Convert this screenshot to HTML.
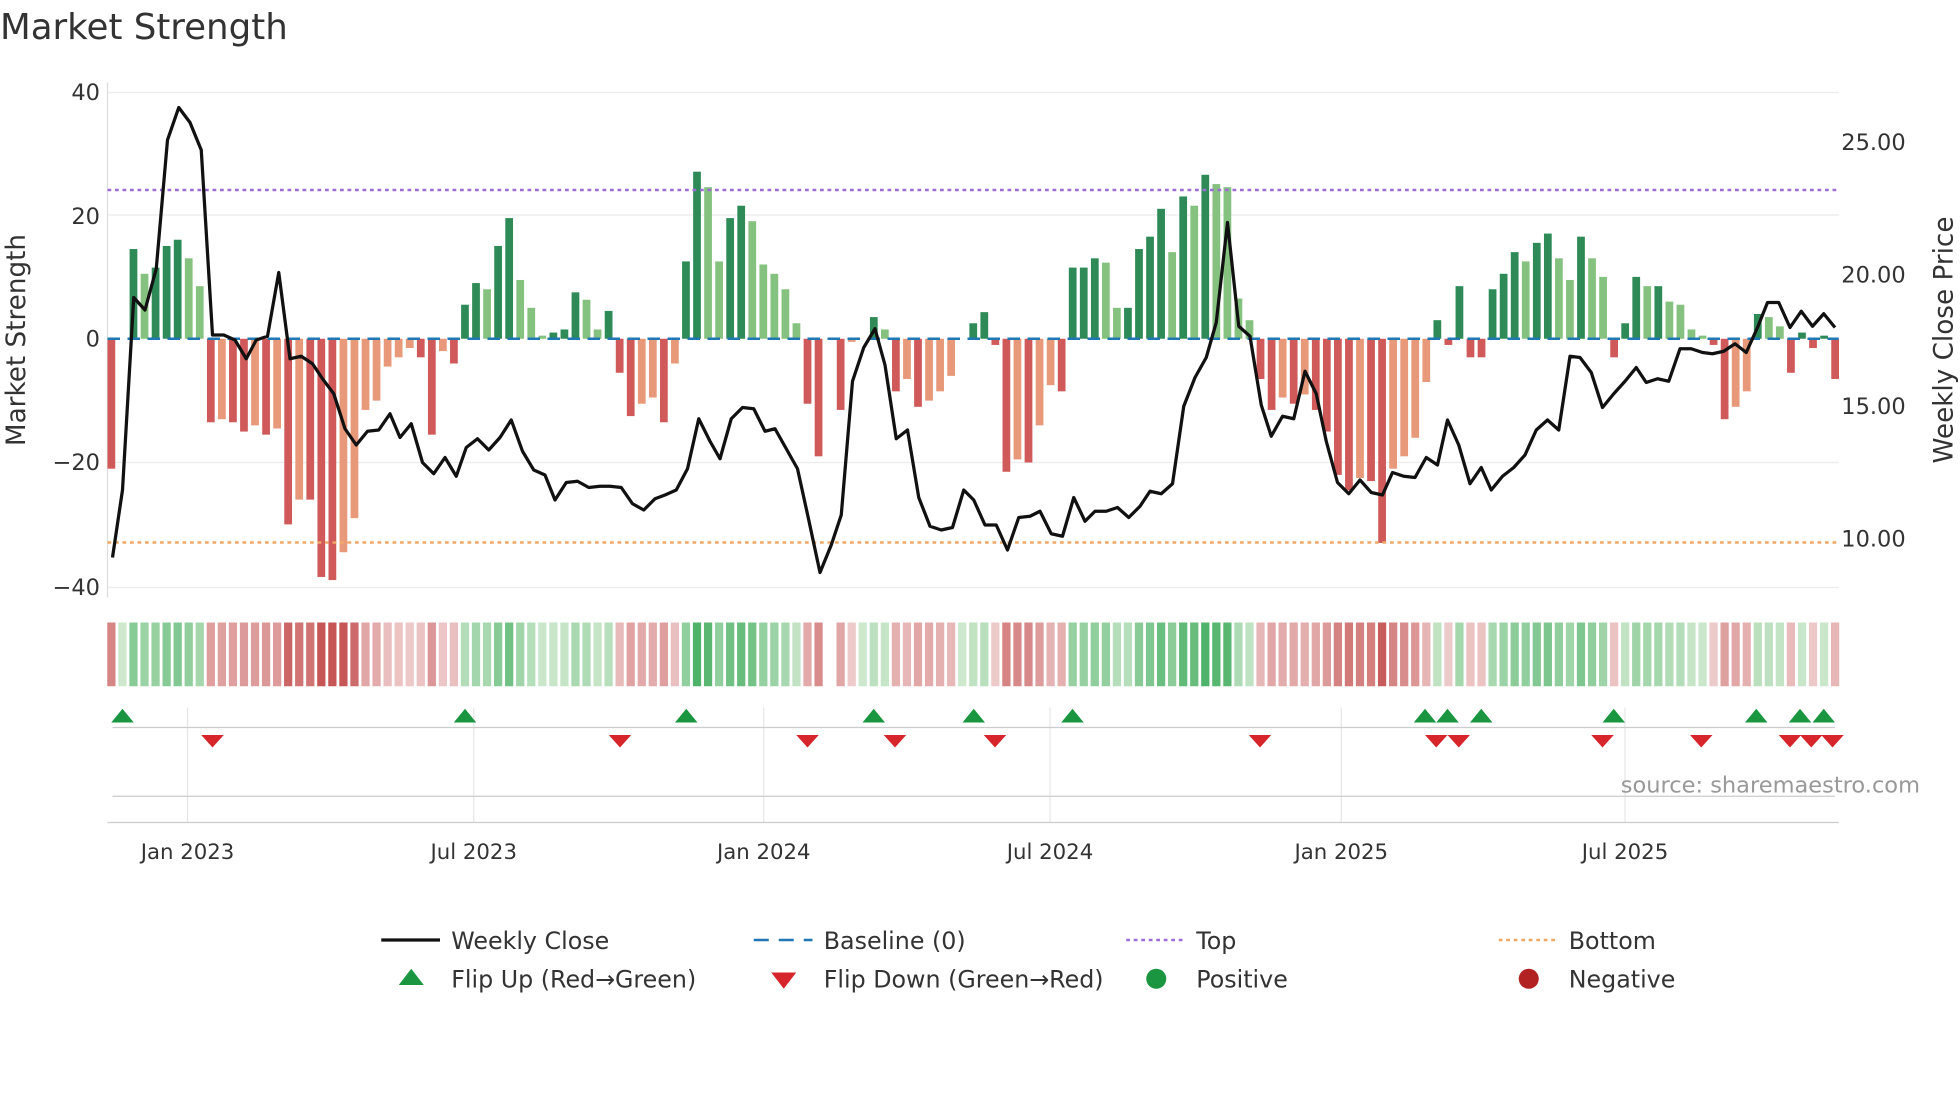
<!DOCTYPE html>
<html><head><meta charset="utf-8"><style>
html,body{margin:0;padding:0;background:#fff;}
svg{display:block;font-family:"DejaVu Sans","Liberation Sans",sans-serif;}
</style></head><body>
<svg id="s" width="1960" height="1102" viewBox="0 0 1568 881.6" xmlns="http://www.w3.org/2000/svg">
<rect width="1568" height="882" fill="#fff"/>
<text x="0" y="31" font-size="28.5" fill="#333">Market Strength</text>
<g stroke="#ececec" stroke-width="1">
<line x1="86" x2="1471" y1="74" y2="74"/><line x1="86" x2="1471" y1="172" y2="172"/>
<line x1="86" x2="1471" y1="370" y2="370"/><line x1="86" x2="1471" y1="470" y2="470"/>
</g>
<line x1="86" x2="86" y1="66" y2="478" stroke="#ddd"/>
<g font-size="18" fill="#333" text-anchor="end">
<text x="80" y="80">40</text><text x="80" y="179">20</text><text x="80" y="277">0</text>
<text x="80" y="376">−20</text><text x="80" y="476">−40</text>
</g>
<g font-size="18" fill="#333">
<text x="1473" y="120">25.00</text><text x="1473" y="226">20.00</text>
<text x="1473" y="331">15.00</text><text x="1473" y="437">10.00</text>
</g>
<text transform="translate(20,272) rotate(-90)" font-size="21" fill="#333" text-anchor="middle">Market Strength</text>
<text transform="translate(1562,272) rotate(-90)" font-size="21" fill="#333" text-anchor="middle">Weekly Close Price</text>
<g id="bars"></g>
<line x1="86" x2="1471" y1="152" y2="152" stroke="#9b6fd6" stroke-width="2" stroke-dasharray="3,3"/>
<line x1="86" x2="1471" y1="434" y2="434" stroke="#f0a866" stroke-width="2" stroke-dasharray="3,3"/>
<line x1="86" x2="1471" y1="271" y2="271" stroke="#1f77b4" stroke-width="2" stroke-dasharray="10,6"/>
<polyline id="price" fill="none" stroke="#111" stroke-width="2.6" stroke-linejoin="round"/>
<g id="heat"></g>
<g stroke="#e6e6e6"><line x1="150" x2="150" y1="566" y2="658"/><line x1="379" x2="379" y1="566" y2="658"/><line x1="611" x2="611" y1="566" y2="658"/><line x1="840" x2="840" y1="566" y2="658"/><line x1="1073" x2="1073" y1="566" y2="658"/><line x1="1300" x2="1300" y1="566" y2="658"/></g>
<line x1="90" x2="1468" y1="582" y2="582" stroke="#ccc"/>
<line x1="90" x2="1468" y1="637" y2="637" stroke="#ccc"/>
<line x1="86" x2="1471" y1="658" y2="658" stroke="#ccc"/>
<g id="mk"></g>
<text x="1536" y="634" font-size="18" fill="#999" text-anchor="end">source: sharemaestro.com</text>
<g font-size="17" fill="#333" text-anchor="middle">
<text x="150" y="687">Jan 2023</text><text x="379" y="687">Jul 2023</text><text x="611" y="687">Jan 2024</text>
<text x="840" y="687">Jul 2024</text><text x="1073" y="687">Jan 2025</text><text x="1300" y="687">Jul 2025</text>
</g>
<g font-size="19" fill="#333">
<line x1="305" x2="352" y1="752" y2="752" stroke="#111" stroke-width="2.6"/><text x="361" y="759">Weekly Close</text>
<line x1="603" x2="650" y1="752" y2="752" stroke="#1f77b4" stroke-width="2" stroke-dasharray="12,8"/><text x="659" y="759">Baseline (0)</text>
<line x1="901" x2="948" y1="752" y2="752" stroke="#9b6fd6" stroke-width="2" stroke-dasharray="3,3"/><text x="957" y="759">Top</text>
<line x1="1199" x2="1246" y1="752" y2="752" stroke="#f0a866" stroke-width="2" stroke-dasharray="3,3"/><text x="1255" y="759">Bottom</text>
<polygon points="319,788 329,775 339,788" fill="#1a9641"/><text x="361" y="790">Flip Up (Red→Green)</text>
<polygon points="617,778 627,791 637,778" fill="#d7262b"/><text x="659" y="790">Flip Down (Green→Red)</text>
<circle cx="925" cy="783" r="8" fill="#1a9641"/><text x="957" y="790">Positive</text>
<circle cx="1223" cy="783" r="8" fill="#b22222"/><text x="1255" y="790">Negative</text>
</g>
</svg>
<script>
var NS="http://www.w3.org/2000/svg";
function el(t,a,p){var e=document.createElementNS(NS,t);for(var k in a)e.setAttribute(k,a[k]);document.getElementById(p).appendChild(e);return e;}
var v=[-21,0,14.5,10.5,11.5,15,16,13,8.5,-13.5,-13,-13.5,-15,-14,-15.5,-14.5,-30,-26,-26,-38.5,-39,-34.5,-29,-11.5,-10,-4.5,-3,-1.5,-3,-15.5,-2,-4,5.5,9,8,15,19.5,9.5,5,0.5,1,1.5,7.5,6.3,1.5,4.5,-5.5,-12.5,-10.5,-9.5,-13.5,-4,12.5,27,24.5,12.5,19.5,21.5,19,12,10.5,8,2.5,-10.5,-19,0,-11.5,-0.5,0,3.5,1.5,-8.5,-6.5,-11,-10,-8.5,-6,0,2.5,4.3,-1,-21.5,-19.5,-20,-14,-7.5,-8.5,11.5,11.5,13,12.3,5,5,14.5,16.5,21,14,23,21.5,26.5,25,24.5,6.5,3,-6.5,-11.5,-9.5,-10.5,-9,-11.5,-15,-22,-24.5,-22.5,-23,-33,-21,-19,-16,-7,3,-1,8.5,-3,-3,8,10.5,14,12.5,15.5,17,13,9.5,16.5,13,10,-3,2.5,10,8.5,8.5,6,5.5,1.5,0.5,-1,-13,-11,-8.5,4,3.5,2,-5.5,1,-1.5,0.5,-6.5];
var n=v.length,dx=(1468-89)/(n-1);
for(var i=0;i<n;i++){var x=89+i*dx,y0=271,h=v[i]*4.95,p=i?v[i-1]:0,c;
 if(v[i]>=0)c=(v[i]>=p)?"#2e8b57":"#86c27f"; else c=(v[i]<=p)?"#d05a5a":"#e8997a";
 if(Math.abs(v[i])>0.2)el("rect",{x:x-3,y:h>0?y0-h:y0,width:6.2,height:Math.abs(h),fill:c},"bars");
 var a=Math.min(1,Math.abs(v[i])/35), hc;
 if(v[i]>=0){hc="rgb("+Math.round(205-165*a)+","+Math.round(232-70*a)+","+Math.round(205-130*a)+")";}
 else{hc="rgb("+Math.round(238-40*a)+","+Math.round(205-120*a)+","+Math.round(205-120*a)+")";}
 if(i!=65)el("rect",{x:x-3.2,y:498,width:6.6,height:51,fill:hc},"heat");}
var pts="90,446 98,392 107,238 116,248 125,215 134,112 143,86 152,98 161,120 170,268 179,268 188,272 197,287 205,272 214,269 223,218 232,287 241,285 250,291 258,303 267,315 276,343 285,356 294,345 303,344 312,331 320,350 329,339 338,370 347,379 356,366 365,381 373,358 382,351 391,360 400,350 409,336 418,361 427,376 436,380 444,400 453,386 462,385 471,390 480,389 488,389 497,390 506,403 515,408 524,399 532,396 541,392 550,375 559,335 568,353 576,367 585,335 594,326 603,327 612,345 620,343 629,359 638,375 647,416 656,458 665,436 673,412 682,305 691,278 700,263 708,292 717,351 726,344 735,398 744,421 753,424 762,422 771,392 779,400 788,420 797,420 806,440 815,414 824,413 832,409 841,427 850,429 859,398 868,417 876,409 885,409 894,406 903,414 912,405 920,393 929,395 938,387 947,325 956,302 965,286 973,258 982,178 991,261 1000,269 1009,324 1017,349 1026,333 1035,335 1044,297 1053,315 1061,353 1070,386 1079,395 1088,384 1097,394 1106,396 1114,378 1123,381 1132,382 1141,366 1150,372 1158,336 1167,356 1176,387 1185,374 1193,392 1202,381 1211,374 1220,364 1229,344 1238,336 1247,344 1256,285 1264,286 1273,298 1282,326 1291,315 1300,305 1309,294 1317,306 1326,303 1335,305 1344,279 1353,279 1362,282 1370,283 1379,281 1388,275 1397,282 1406,262 1414,242 1423,242 1432,262 1441,249 1450,261 1459,251 1468,262";
document.getElementById("price").setAttribute("points",pts);
[98,372,549,699,779,858,1140,1158,1185,1291,1405,1440,1459].forEach(function(x){el("polygon",{points:(x-9)+",578 "+x+",567 "+(x+9)+",578",fill:"#1a9641"},"mk");});
[170,496,646,716,796,1008,1149,1167,1282,1361,1432,1449,1466].forEach(function(x){el("polygon",{points:(x-9)+",588 "+x+",598 "+(x+9)+",588",fill:"#d7262b"},"mk");});
</script>
</body></html>
